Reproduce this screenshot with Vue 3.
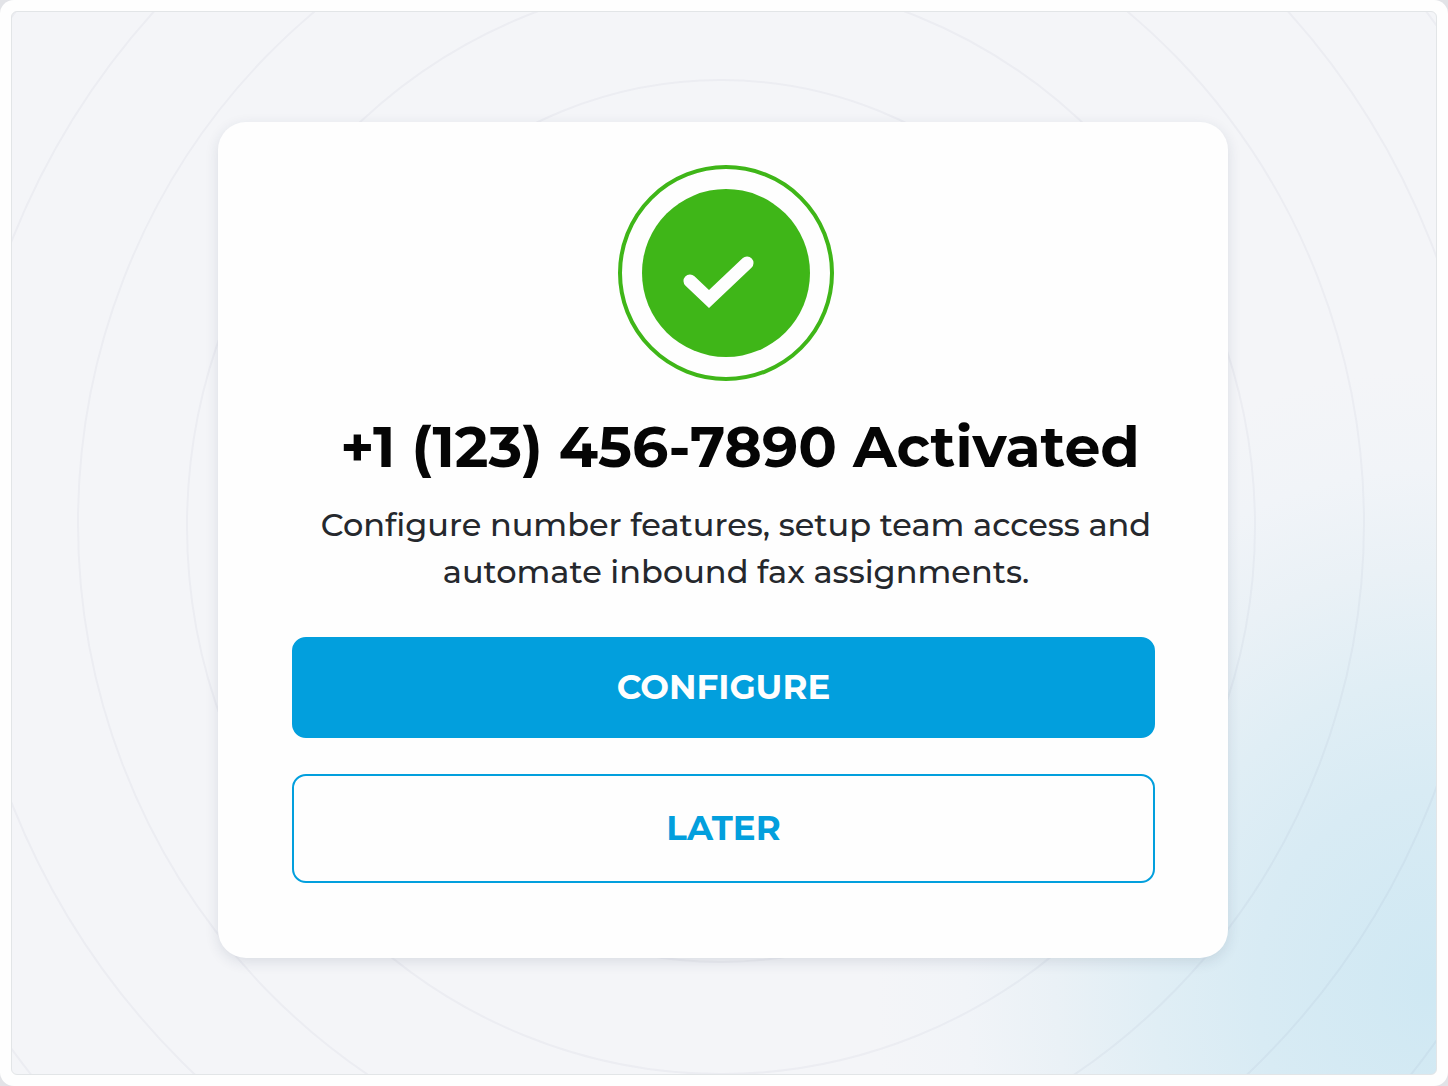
<script setup>
const rings = [
  { rx: 430, ry: 441, cy: 509 },
  { rx: 534, ry: 548, cy: 514 },
  { rx: 643, ry: 660, cy: 511 },
  { rx: 763, ry: 763, cy: 510 },
  { rx: 877, ry: 877, cy: 521 },
]
</script>

<template>
  <div class="frame">
    <main class="stage">
      <svg class="rings" viewBox="0 0 1424 1062" preserveAspectRatio="xMidYMid slice" aria-hidden="true">
        <ellipse v-for="ring in rings" :key="ring.rx" cx="709" :cy="ring.cy" :rx="ring.rx" :ry="ring.ry" />
      </svg>
      <section class="card" aria-labelledby="title">
        <div class="intro">
          <svg class="badge" viewBox="0 0 216 216" aria-hidden="true">
            <circle cx="108" cy="108" r="106" fill="none" stroke="#3fb618" stroke-width="4" />
            <circle cx="108" cy="108" r="84" fill="#3fb618" />
            <path class="tick" d="M72 116 L91 134 L129 98" />
          </svg>
          <h1 id="title">+1 (123) 456-7890 Activated</h1>
          <p>Configure number features, setup team access and<br />automate inbound fax assignments.</p>
        </div>
        <div class="actions">
          <button type="button" class="primary">CONFIGURE</button>
          <button type="button" class="secondary">LATER</button>
        </div>
      </section>
    </main>
  </div>
</template>

<style>
body {
  margin: 0;
  background: #e2e3e7;
}
</style>

<style scoped>
.frame {
  box-sizing: border-box;
  display: flex;
  min-height: 100vh;
  padding: 11px;
  border-radius: 14px;
  background: #fefefe;
  font-family: Montserrat, "Noto Sans", sans-serif;
}
.stage {
  position: relative;
  flex: 1;
  display: flex;
  justify-content: center;
  align-items: center;
  box-sizing: border-box;
  padding: 0 2px 6px 0;
  overflow: hidden;
  border: 1px solid #e2e5e7;
  border-radius: 6px;
  background:
    radial-gradient(ellipse 560px 620px at 100% 92%, #cfe8f3 0%, #d8ebf4 32%, #e0eef5 50%, #eaf1f6 68%, #f1f4f8 84%, #f4f5f8 100%);
}
.rings {
  position: absolute;
  inset: 0;
  width: 100%;
  height: 100%;
  fill: none;
  stroke: rgba(40, 55, 95, 0.04);
  stroke-width: 2;
}
.card {
  position: relative;
  box-sizing: border-box;
  width: 71%;
  padding: 43px 73px 75px 74px;
  border-radius: 28px;
  background: #fefefe;
  box-shadow: 0 4px 14px rgba(30, 50, 80, 0.12);
  text-align: center;
}
.intro {
  padding-left: 5px;
}
.badge {
  display: block;
  width: 216px;
  height: 216px;
  margin: 0 auto;
}
.tick {
  fill: none;
  stroke: #fefefe;
  stroke-width: 13;
  stroke-linecap: round;
  stroke-linejoin: miter;
}
h1 {
  margin: 30px 0 0 28px;
  color: #050505;
  font-size: 57px;
  font-weight: 700;
  line-height: 72px;
  white-space: nowrap;
}
p {
  margin: 18px 0 0 20px;
  color: #25282d;
  font-size: 32px;
  font-weight: 500;
  line-height: 47px;
  white-space: nowrap;
}
.actions {
  display: flex;
  flex-direction: column;
  gap: 36px;
  margin-top: 42px;
}
button {
  box-sizing: border-box;
  border: 2px solid #029fdd;
  border-radius: 14px;
  font-family: inherit;
  font-size: 34px;
  font-weight: 700;
  line-height: 41px;
  cursor: pointer;
}
.primary {
  padding: 28px 16px;
  background: #029fdd;
  color: #fefefe;
}
.secondary {
  padding: 32px 16px;
  background: #fefefe;
  color: #029fdd;
}
</style>
